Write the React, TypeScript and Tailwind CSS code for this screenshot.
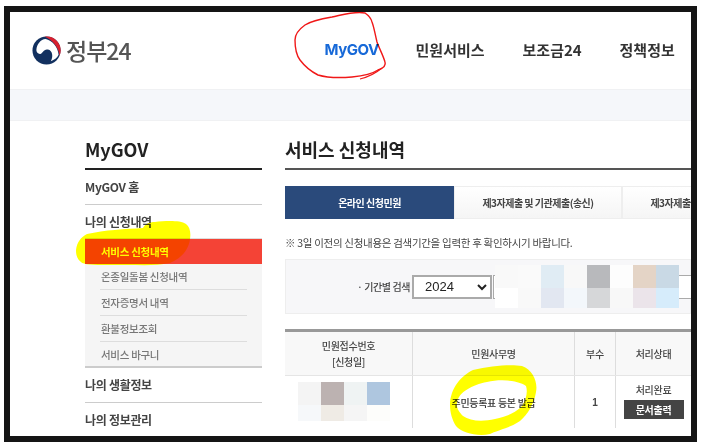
import React from 'react';

const subMenu = ['온종일돌봄 신청내역', '전자증명서 내역', '환불정보조회', '서비스 바구니'];
const searchMosaic = ['#f9f9f9', '#fafafa', '#e0ecf4', '#f8f8f8', '#b8b9bc', '#fdfdfd', '#e4d4c6', '#c9d9e5', '#ffffff', '#f9f9f9', '#e2e7f1', '#f3f7fb', '#d6d7d9', '#f8f8f8', '#ebe4ea', '#d6ecfb'];
const tableMosaic = ['#f4f4f4', '#bcb2b1', '#eff3f3', '#aec6df', '#f6f8fa', '#efebe5', '#f5f5f5', '#fdfdfb'];

const Logo = () => (
  <svg width="29" height="29" viewBox="0 0 30 30">
    <circle cx="15" cy="15" r="14.500" fill="#12305f" />
    <path d="M4.500 14.500C5 8 9 3.500 14 3c7 1.500 13 8 13.500 16.500-1.500 3.500-4.500 5.500-8 6.500 2.500-4 2-11-3-12-4.500-1-5 4-8 4.500-2 .3-4-1.500-4-4Z" fill="#fff" />
    <path d="M13 .6A14.500 14.500 0 0 1 28.500 20.500C28 12 21 4 13 .6Z" fill="#d6202f" />
  </svg>
);

export default function App() {
  return (
    <div className="relative w-[703px] h-[448px] overflow-hidden bg-white pt-[6px] pl-[4px] blur-[0.45px] font-['Noto_Sans_CJK_KR','Noto_Sans',sans-serif]">
      <div className="w-[693px] h-[436px] border-[6px] border-[#151515] overflow-hidden bg-white">
        {/* header */}
        <div className="h-[77px] flex items-center pl-[22px]">
          <Logo />
          <span className="ml-[5px] text-[23px] font-medium leading-none tracking-[-1px] text-[#555]">정부24</span>
          <nav className="ml-[194px] flex items-center text-[15px] font-bold text-[#333] whitespace-nowrap">
            <span className="w-[91px] text-[#1769d8] font-['Inter',sans-serif] tracking-[-0.5px]">MyGOV</span>
            <span className="w-[107px]">민원서비스</span>
            <span className="w-[97px]">보조금24</span>
            <span>정책정보</span>
          </nav>
        </div>
        <div className="h-[32px] bg-[#f5f7fa] border-y border-[#f0f1f3]" />

        <div className="flex pl-[75px] gap-[23px]">
          {/* sidebar */}
          <aside className="w-[177px] shrink-0 text-[12px] font-bold tracking-[-0.3px] text-[#444]">
            <h2 className="h-[49px] pt-[9px] flex items-center text-[18px] tracking-normal text-[#222] border-b-2 border-[#222]">MyGOV</h2>
            <div className="h-[35px] flex items-center border-b border-[#ccc]">MyGOV 홈</div>
            <div className="h-[33px] flex items-center">나의 신청내역</div>
            <div className="h-[130px] bg-[#f5f5f5] border-b-2 border-[#ccc] border-t border-t-[#ddd] text-[10.5px] font-medium text-[#777]">
              <div className="h-[25px] bg-[#f44336] text-white font-bold flex items-center pl-[16px]">서비스 신청내역</div>
              <div className="px-[15px]">
                {subMenu.map((item, i) => (
                  <div key={item} className={`h-[26px] flex items-center pl-px ${i < 3 ? 'border-b border-[#ddd]' : ''}`}>{item}</div>
                ))}
              </div>
            </div>
            <div className="h-[35px] flex items-center border-b border-[#ccc]">나의 생활정보</div>
            <div className="h-[34px] flex items-center">나의 정보관리</div>
          </aside>

          {/* main */}
          <main className="w-[406px] shrink-0">
            <h1 className="h-[49px] pt-[9px] flex items-center text-[18px] font-bold text-[#222] border-b-2 border-[#555]">서비스 신청내역</h1>
            <div className="mt-[16px] flex h-[33px] text-[10px] font-bold tracking-[-0.5px] text-[#444] whitespace-nowrap">
              <div className="w-[169px] shrink-0 bg-[#2a4a7b] text-white flex items-center justify-center">온라인 신청민원</div>
              <div className="w-[168px] shrink-0 border border-[#eee] bg-gradient-to-b from-white to-[#f5f5f5] flex items-center justify-center">제3자제출 및 기관제출(송신)</div>
              <div className="w-[168px] shrink-0 border border-[#eee] bg-gradient-to-b from-white to-[#f5f5f5] flex items-center justify-center">제3자제출 및 기관제출(수신)</div>
            </div>
            <p className="mt-[16px] h-[16px] flex items-center text-[10.5px] tracking-[-0.3px] text-[#444] whitespace-nowrap">※ 3일 이전의 신청내용은 검색기간을 입력한 후 확인하시기 바랍니다.</p>
            <div className="mt-[8px] h-[55px] bg-[#f7f7f9] border border-[#eeeeee] flex items-center pl-[71px] text-[10px] tracking-[-0.4px] font-medium text-[#444]">
              <span className="w-[55px] shrink-0 whitespace-nowrap">· 기간별 검색</span>
              <select defaultValue="2024" className="w-[80px] h-[24px] shrink-0 bg-white border-2 border-[#aaa] pl-[7px] text-[13px] tracking-normal text-[#222] font-['Liberation_Sans',sans-serif]">
                <option>2024</option>
              </select>
              <div className="relative ml-[1px] w-[200px] h-[24px] shrink-0 bg-white border border-[#aaa]">
                <div className="absolute left-[1px] top-[-11px] grid grid-cols-[repeat(8,23px)] grid-rows-[23px_20px]">
                  {searchMosaic.map((c, i) => (
                    <div key={i} style={{ backgroundColor: c }} />
                  ))}
                </div>
              </div>
            </div>

            {/* table */}
            <div className="mt-[15px] border-t-[3px] border-[#999] text-[10px] tracking-[-0.3px] font-medium text-[#444] text-center">
              <div className="grid grid-cols-[128px_162px_41px_75px] h-[44px] bg-[#f8f8f8] border-b border-[#e5e5e5] leading-[16px]">
                <div className="flex items-center justify-center border-r border-[#ddd]">민원접수번호<br />[신청일]</div>
                <div className="flex items-center justify-center border-r border-[#ddd]">민원사무명</div>
                <div className="flex items-center justify-center border-r border-[#ddd]">부수</div>
                <div className="flex items-center justify-center">처리상태</div>
              </div>
              <div className="grid grid-cols-[128px_162px_41px_75px] h-[52px]">
                <div className="border-r border-[#ddd] pl-[13px] pt-[6px]">
                  <div className="grid grid-cols-[repeat(4,23px)] grid-rows-[23px_16px]">
                    {tableMosaic.map((c, i) => (
                      <div key={i} style={{ backgroundColor: c }} />
                    ))}
                  </div>
                </div>
                <div className="flex items-center justify-center border-r border-[#ddd] text-[#333]">주민등록표 등본 발급</div>
                <div className="flex items-center justify-center border-r border-[#ddd] font-['Liberation_Sans',sans-serif] font-bold">1</div>
                <div className="flex flex-col items-center pt-[6px]">
                  <span className="h-[16px] leading-[16px]">처리완료</span>
                  <button className="mt-[2px] w-[60px] h-[19px] bg-[#444] text-white text-[10px] font-bold">문서출력</button>
                </div>
              </div>
            </div>
          </main>
        </div>
      </div>

      {/* hand-drawn marks on top of the screenshot */}
      <svg className="absolute left-0 top-0 pointer-events-none mix-blend-multiply" width="703" height="448" viewBox="0 0 703 448" fill="none">
        <path d="M365 13C354 11 342 15 332 17 320 19 311 21 305 25 298 30 295 34 295 40 295 50 297 56 300 60 306 68 312 72 318 75 328 78 340 78 352 77 362 76 372 74 378 70 384 68 386 65 385 62 383 55 379 48 377 42 375 34 374 27 372 22 371 18 368 15 365 13Z" stroke="#f01818" strokeWidth="1.400" />
        <path d="M360 79C368 77 376 73 382 68" stroke="#f01818" strokeWidth="1.200" />
        <path d="M76 250c1-8 5-13 11-16 18-4 38-5 56-6 2-4 6-6 12-6 10-1 25-2 31 2 4 3 5 9 4 15-1 10-8 19-20 24-14 3-28 2-44 2-18 0-42 1-45-3-4-3-5-7-5-12Z" fill="#ffff00" />
        <path fillRule="evenodd" d="M450 405C450 388 462 375 473 370 490 366 510 364 522 366 533 370 538 382 536 392 534 404 528 414 520 421 510 428 495 431 490 434 478 437 462 433 456 426 452 420 450 412 450 405ZM457 402C459 392 472 385 487 382 500 379 518 380 526 386 528 392 526 400 522 406 516 413 505 417 495 419 482 422 470 421 463 416 459 412 456 408 457 402Z" fill="#ffff00" />
      </svg>
    </div>
  );
}
